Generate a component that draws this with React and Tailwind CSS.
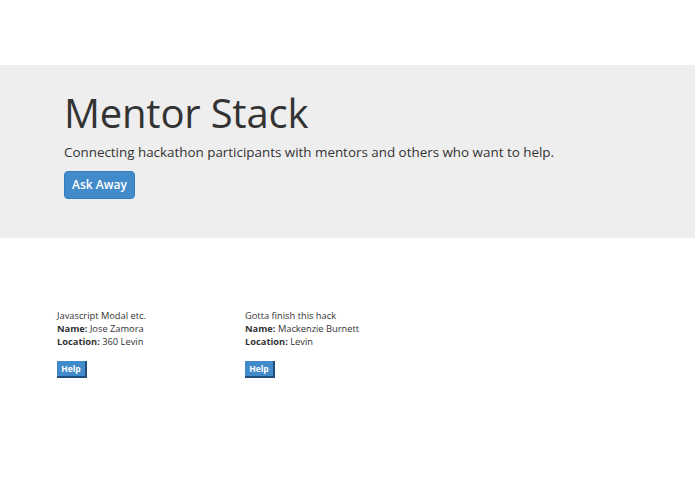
const requests = [
  { id: 1, title: "Javascript Modal etc.", name: "Jose Zamora", location: "360 Levin" },
  { id: 2, title: "Gotta finish this hack", name: "Mackenzie Burnett", location: "Levin" },
];

function RequestCard({ request }) {
  return (
    <div className="w-[188px] text-[9.3px] leading-[13px] text-[#333]">
      <p>{request.title}</p>
      <p>
        <span className="font-bold">Name:</span> {request.name}
      </p>
      <p>
        <span className="font-bold">Location:</span> {request.location}
      </p>
      <button className="mt-[13px] h-[17px] w-[30px] bg-[#428bca] border-r-2 border-b-2 border-[#1f4f7a] text-white text-[8.5px] font-bold leading-[15px]">
        Help
      </button>
    </div>
  );
}

export default function App() {
  return (
    <div className="w-[695px] h-[494px] bg-white font-['Open_Sans',sans-serif] text-[#333]">
      <div className="h-[65px]" />
      <div className="h-[173px] bg-[#eeeeee] pl-[64px] pt-[22px]">
        <h1 className="text-[40px] leading-[52px] font-normal tracking-[-0.2px]">Mentor Stack</h1>
        <p className="mt-[3px] text-[13.4px] leading-[20px]">
          Connecting hackathon participants with mentors and others who want to help.
        </p>
        <button className="mt-[9px] h-[28px] w-[71px] rounded-[4px] bg-[#428bca] border border-[#357ebd] text-white text-[12px] font-semibold">
          Ask Away
        </button>
      </div>
      <div className="flex pl-[57px] pt-[71px]">
        {requests.map((r) => (
          <RequestCard key={r.id} request={r} />
        ))}
      </div>
    </div>
  );
}
